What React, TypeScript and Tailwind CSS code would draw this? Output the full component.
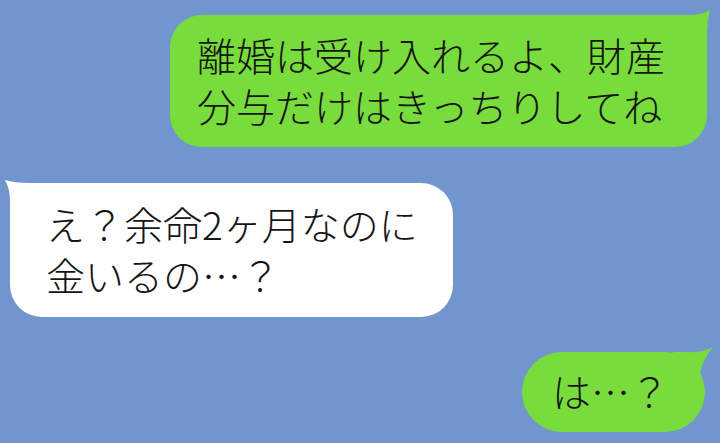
import React from 'react';

const font = { fontFamily: '"Noto Sans CJK JP", "Noto Sans", sans-serif' };

function TailRight({ color, path }: { color: string; path: string }) {
  return (
    <svg className="absolute -right-[12px] -top-[8px]" width={44} height={40} viewBox="0 0 44 40">
      <path d={path} fill={color} />
    </svg>
  );
}

export default function App() {
  return (
    <div className="w-[720px] h-[443px] bg-[#7196ce] flex flex-col pt-[15px] overflow-hidden text-[#151515] font-light" style={font}>
      {/* 自分 */}
      <div className="relative self-end mr-[13px] w-[537px] rounded-[32px] bg-[#79dc3d] pl-[27px] pt-[14px] pb-[16px] text-[39px] leading-[51px] whitespace-nowrap">
        <TailRight color="#79dc3d" path="M0,8 L13,8 Q28,8 35,3 Q32,14 32,26 L32,40 L0,40 Z" />
        <span className="relative">離婚は受け入れるよ、財産</span>
        <br />
        <span className="relative">分与だけはきっちりしてね</span>
      </div>

      {/* 相手 */}
      <div className="relative self-start ml-[10px] mt-[36px] w-[443px] rounded-[32px] bg-white pl-[36px] pt-[15px] pb-[17px] text-[39px] leading-[51px] whitespace-nowrap">
        <svg className="absolute -left-[8px] -top-[8px]" width={40} height={40} viewBox="0 0 40 40">
          <path d="M40,8 L28,8 Q12,8 3,5 Q8,14 8,26 L8,40 L40,40 Z" fill="#ffffff" />
        </svg>
        <span className="relative">え？余命2ヶ月なのに</span>
        <br />
        <span className="relative">金いるの…？</span>
      </div>

      {/* 自分 */}
      <div className="relative self-end mr-[15px] mt-[35px] w-[183px] rounded-full bg-[#79dc3d] pl-[30px] pt-[13px] pb-[16px] text-[39px] leading-[51px] whitespace-nowrap">
        <TailRight color="#79dc3d" path="M0,8 L14,8 Q30,9 40,3 Q31,13 27,29 L0,30 Z" />
        <span className="relative">は…？</span>
      </div>
    </div>
  );
}
